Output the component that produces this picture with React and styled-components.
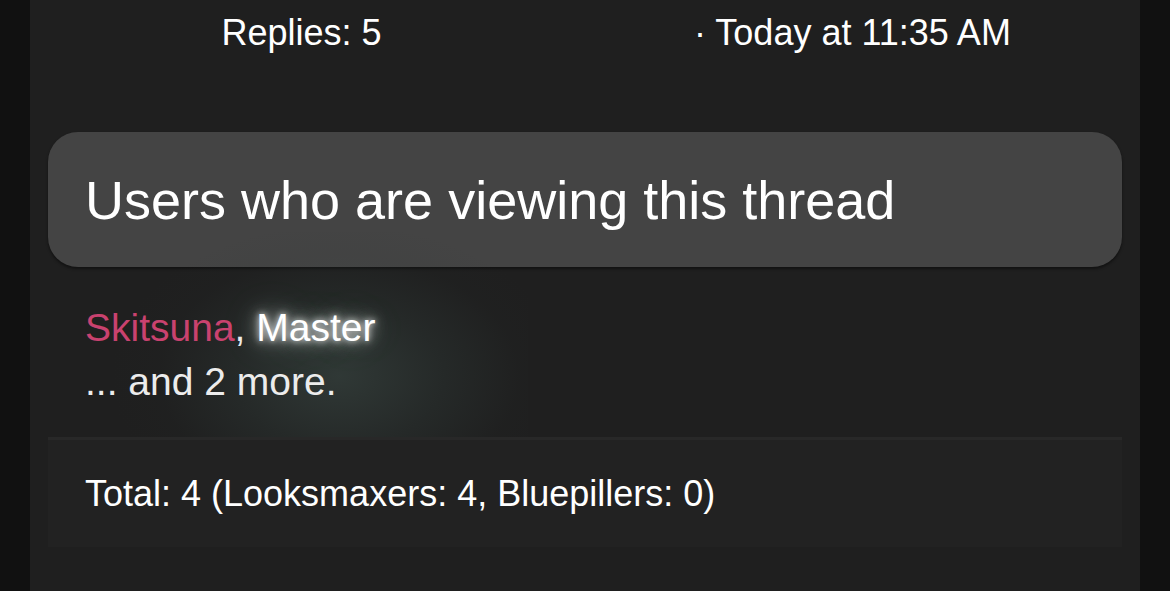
import React from "react";
import styled, { createGlobalStyle } from "styled-components";

const Global = createGlobalStyle`
  html, body {
    margin: 0;
    padding: 0;
    background: #111111;
  }
  body {
    font-family: "Liberation Sans", Arial, Helvetica, sans-serif;
    color: #ffffff;
    -webkit-font-smoothing: antialiased;
  }
`;

const Page = styled.div`
  min-height: 591px;
  padding: 0 30px 0 30px;
  box-sizing: border-box;
`;

const Panel = styled.main`
  background: #1f1f1f;
  min-height: 591px;
  padding: 0 18px 0 18px;
  box-sizing: border-box;
  overflow: hidden;
`;

const MetaRow = styled.div`
  display: grid;
  grid-template-columns: 507px 1fr;
  padding-top: 11px;
  font-size: 36px;
  line-height: 43px;
`;

const MetaCell = styled.div`
  text-align: ${(p) => (p.$center ? "center" : "left")};
  padding-left: ${(p) => p.$indent || 0}px;
  white-space: nowrap;
`;

const Block = styled.section`
  margin-top: 78px;
  position: relative;
`;

const BlockHeader = styled.h3`
  margin: 0;
  height: 135px;
  display: flex;
  align-items: center;
  padding: 0 37px;
  background: #444444;
  border-radius: 30px;
  font-weight: 400;
  font-size: 54px;
  line-height: normal;
  box-shadow: 0 2px 3px rgba(0, 0, 0, 0.45);
  position: relative;
  z-index: 1;
`;

/* soft teal haze spreading around the highlighted user name */
const Halo = styled.div`
  position: absolute;
  left: 60px;
  top: 100px;
  width: 420px;
  height: 300px;
  background: radial-gradient(
    ellipse at 55% 48%,
    rgba(80, 105, 98, 0.34) 0%,
    rgba(62, 82, 77, 0.2) 32%,
    rgba(40, 50, 48, 0.06) 55%,
    rgba(40, 50, 48, 0) 70%
  );
  pointer-events: none;
  z-index: 2;
`;

const UserList = styled.div`
  position: relative;
  z-index: 3;
  padding: 34px 37px 0;
  font-size: 39px;
  line-height: 54px;
  color: #ececec;
`;

const Line = styled.div`
  white-space: nowrap;
`;

const UserLink = styled.span`
  color: ${(p) => (p.$role === "staff" ? "#c9426f" : "#ffffff")};
  text-shadow: ${(p) =>
    p.$glow
      ? "0 0 6px rgba(255,255,255,0.8), 0 0 14px rgba(255,255,255,0.6), 0 0 24px rgba(220,235,230,0.45), 0 0 40px rgba(190,215,205,0.3)"
      : "none"};
`;

const Footer = styled.div`
  margin-top: 28px;
  height: 110px;
  box-sizing: border-box;
  border-top: 3px solid #282828;
  background: #222222;
  display: flex;
  align-items: center;
  padding: 0 37px;
  font-size: 36px;
  position: relative;
  z-index: 3;
`;

export default function App() {
  return (
    <>
      <Global />
      <Page>
        <Panel>
          <MetaRow>
            <MetaCell $center>Replies: 5</MetaCell>
            <MetaCell $indent={139}>· Today at 11:35 AM</MetaCell>
          </MetaRow>
          <Block>
            <BlockHeader>Users who are viewing this thread</BlockHeader>
            <Halo />
            <UserList>
              <Line>
                <UserLink $role="staff">Skitsuna</UserLink>,{" "}
                <UserLink $glow>Master</UserLink>
              </Line>
              <Line>... and 2 more.</Line>
            </UserList>
            <Footer>Total: 4 (Looksmaxers: 4, Bluepillers: 0)</Footer>
          </Block>
        </Panel>
      </Page>
    </>
  );
}
